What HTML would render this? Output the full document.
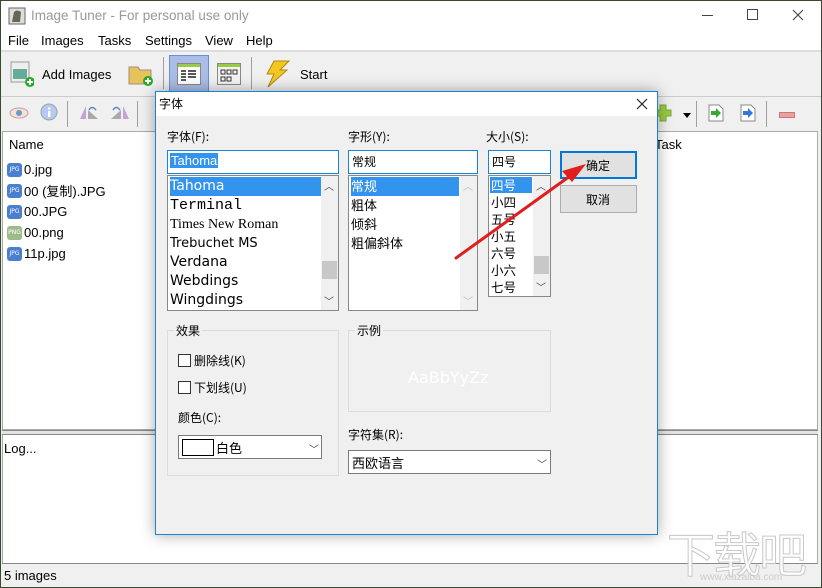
<!DOCTYPE html>
<html><head><meta charset="utf-8"><style>
*{margin:0;padding:0;box-sizing:border-box}
body{width:822px;height:588px;position:relative;overflow:hidden;background:#3b4a2c;font-family:"DejaVu Sans","Liberation Sans","Noto Sans CJK SC",sans-serif;font-size:12px;color:#000}
.a{position:absolute}
.t{font-family:"Liberation Sans","Noto Sans CJK SC",sans-serif;font-size:13px;white-space:nowrap}
.cj{font-family:"Noto Sans CJK SC","Liberation Sans",sans-serif;font-size:12px;white-space:nowrap}
.sep{position:absolute;width:1px;background:#a0a0a0}
</style></head><body>
<div class="a" style="left:1px;top:1px;width:820px;height:586px;background:#f0f0f0"></div>
<div class="a" style="left:1px;top:1px;width:820px;height:49px;background:#fff"></div>
<svg class="a" style="left:8px;top:7px" width="18" height="18"><rect x="1" y="1" width="16" height="16" fill="#ddd" stroke="#666"/><path d="M4 15 L6 5 Q9 2 13 5 L12 15 Z" fill="#665"/></svg>
<div class="a t" style="left:31px;top:8px;color:#999;font-size:13.5px">Image Tuner - For personal use only</div>
<div class="a" style="left:702px;top:15px;width:11px;height:1px;background:#444"></div>
<div class="a" style="left:747px;top:9px;width:11px;height:11px;border:1px solid #444"></div>
<svg class="a" style="left:792px;top:9px" width="12" height="12"><path d="M1 1L11 11M11 1L1 11" stroke="#444" stroke-width="1.1"/></svg>
<div class="a t" style="left:8px;top:33px">File</div>
<div class="a t" style="left:41px;top:33px">Images</div>
<div class="a t" style="left:98px;top:33px">Tasks</div>
<div class="a t" style="left:145px;top:33px">Settings</div>
<div class="a t" style="left:205px;top:33px">View</div>
<div class="a t" style="left:246px;top:33px">Help</div>
<div class="a" style="left:1px;top:50px;width:820px;height:2px;background:#ddd"></div>
<svg class="a" style="left:10px;top:61px" width="24" height="26"><rect x="1" y="1" width="18" height="20" fill="#eee" stroke="#999"/><rect x="3" y="8" width="14" height="10" fill="#6a9"/><circle cx="20" cy="21" r="5" fill="#2a2"/><path d="M17 21h6M20 18v6" stroke="#fff" stroke-width="2"/></svg>
<div class="a t" style="left:42px;top:67px">Add Images</div>
<svg class="a" style="left:128px;top:62px" width="26" height="24"><path d="M1 5h9l2 3h11v14H1z" fill="#e6c25a" stroke="#a88"/><circle cx="20" cy="19" r="5" fill="#2a2"/><path d="M17 19h6M20 16v6" stroke="#fff" stroke-width="2"/></svg>
<div class="sep" style="left:163px;top:57px;height:32px"></div>
<div class="a" style="left:169px;top:55px;width:40px;height:38px;background:#aabde6;border:1px solid #6a8fd6"></div>
<svg class="a" style="left:177px;top:63px" width="24" height="22"><rect x="0.5" y="0.5" width="23" height="21" fill="#fff" stroke="#888"/><rect x="1" y="1" width="22" height="3" fill="#9c4"/><path d="M4 8h5M11 8h8M4 11h5M11 11h8M4 14h5M11 14h8M4 17h5" stroke="#222" stroke-width="1.5"/></svg>
<svg class="a" style="left:217px;top:63px" width="24" height="22"><rect x="0.5" y="0.5" width="23" height="21" fill="#f4f4f4" stroke="#888"/><rect x="1" y="1" width="22" height="3" fill="#9c4"/><rect x="4" y="7" width="4" height="4" fill="none" stroke="#333"/><rect x="10" y="7" width="4" height="4" fill="none" stroke="#333"/><rect x="16" y="7" width="4" height="4" fill="none" stroke="#333"/><rect x="4" y="14" width="4" height="4" fill="none" stroke="#333"/><rect x="10" y="14" width="4" height="4" fill="none" stroke="#333"/></svg>
<div class="sep" style="left:251px;top:57px;height:32px"></div>
<svg class="a" style="left:264px;top:60px" width="26" height="28"><path d="M10 1h15l-9 9h7L4 27l6-13H3z" fill="#f3c620" stroke="#b08a10"/></svg>
<div class="a t" style="left:300px;top:67px">Start</div>
<div class="a" style="left:1px;top:96px;width:820px;height:1px;background:#ccc"></div>
<svg class="a" style="left:9px;top:106px" width="20" height="14"><ellipse cx="10" cy="7" rx="9" ry="5" fill="#f3e3d0" stroke="#c9a"/><circle cx="10" cy="7" r="3" fill="#6a9ac8"/></svg>
<svg class="a" style="left:40px;top:103px" width="18" height="18"><circle cx="9" cy="9" r="8" fill="#b8c8ee" stroke="#8aa"/><rect x="8" y="8" width="2.4" height="6" fill="#fff"/><circle cx="9.2" cy="5.5" r="1.3" fill="#fff"/></svg>
<div class="sep" style="left:67px;top:101px;height:26px"></div>
<svg class="a" style="left:79px;top:104px" width="20" height="16"><path d="M1 15L7 2v13z" fill="#c9a0d6"/><path d="M9 15h10L9 6z" fill="#aaa"/><path d="M10 6q3-5 7 0" stroke="#58c" fill="none" stroke-width="1.5"/></svg>
<svg class="a" style="left:110px;top:104px" width="20" height="16"><path d="M19 15L13 2v13z" fill="#c9a0d6"/><path d="M11 15H1L11 6z" fill="#aaa"/><path d="M3 6q3-5 7 0" stroke="#58c" fill="none" stroke-width="1.5"/></svg>
<div class="sep" style="left:137px;top:101px;height:26px"></div>
<svg class="a" style="left:654px;top:104px" width="18" height="18"><path d="M6 1h6v5h5v6h-5v5H6v-5H1V6h5z" fill="#9c4" stroke="#7a3"/></svg>
<div class="a" style="left:683px;top:113px;border-left:4px solid transparent;border-right:4px solid transparent;border-top:5px solid #000"></div>
<div class="sep" style="left:696px;top:101px;height:26px"></div>
<svg class="a" style="left:708px;top:104px" width="16" height="18"><path d="M1 1h10l4 4v12H1z" fill="#fff" stroke="#888"/><path d="M3 7h5V4l5 5-5 5v-3H3z" fill="#3a3"/></svg>
<svg class="a" style="left:740px;top:104px" width="16" height="18"><path d="M1 1h10l4 4v12H1z" fill="#fff" stroke="#888"/><path d="M3 7h5V4l5 5-5 5v-3H3z" fill="#37d"/></svg>
<div class="sep" style="left:766px;top:101px;height:26px"></div>
<div class="a" style="left:779px;top:112px;width:16px;height:6px;background:#e9a0a0;border:1px solid #c77"></div>
<div class="a" style="left:2px;top:131px;width:816px;height:299px;background:#fff;border:1px solid #aaa"></div>
<div class="a t" style="left:9px;top:137px">Name</div>
<div class="a t" style="left:655px;top:137px">Task</div>
<div class="a" style="left:7px;top:159px;width:100px">
 <div style="height:21px;display:flex;align-items:center"><span style="display:inline-block;width:15px;height:14px;background:#4a7fd0;border-radius:3px;color:#fff;font-size:6px;line-height:14px;text-align:center;margin-right:2px">JPG</span><span class="t">0.jpg</span></div>
 <div style="height:21px;display:flex;align-items:center"><span style="display:inline-block;width:15px;height:14px;background:#4a7fd0;border-radius:3px;color:#fff;font-size:6px;line-height:14px;text-align:center;margin-right:2px">JPG</span><span class="t">00 (<span class="cj" style="font-size:13px">复制</span>).JPG</span></div>
 <div style="height:21px;display:flex;align-items:center"><span style="display:inline-block;width:15px;height:14px;background:#4a7fd0;border-radius:3px;color:#fff;font-size:6px;line-height:14px;text-align:center;margin-right:2px">JPG</span><span class="t">00.JPG</span></div>
 <div style="height:21px;display:flex;align-items:center"><span style="display:inline-block;width:15px;height:14px;background:#9cbb88;border-radius:3px;color:#fff;font-size:6px;line-height:14px;text-align:center;margin-right:2px">PNG</span><span class="t">00.png</span></div>
 <div style="height:21px;display:flex;align-items:center"><span style="display:inline-block;width:15px;height:14px;background:#4a7fd0;border-radius:3px;color:#fff;font-size:6px;line-height:14px;text-align:center;margin-right:2px">JPG</span><span class="t">11p.jpg</span></div>
</div>
<div class="a" style="left:2px;top:430px;width:816px;height:5px;background:#e4e4e4;border-top:1px solid #888;border-bottom:1px solid #888"></div>
<div class="a" style="left:2px;top:435px;width:816px;height:128px;background:#fff;border-left:1px solid #aaa;border-right:1px solid #aaa"></div>
<div class="a t" style="left:4px;top:441px">Log...</div>
<div class="a" style="left:2px;top:563px;width:816px;height:1px;background:#888"></div>
<div class="a t" style="left:4px;top:568px">5 images</div>
<div class="a cj" style="left:667px;top:516px;font-size:48px;color:rgba(255,255,255,0.9);-webkit-text-stroke:1px #c8c8c8;letter-spacing:-2px">下载吧</div>
<div class="a t" style="left:700px;top:572px;font-size:10px;color:#ccc">www.xiazaiba.com</div>
<div class="a" style="left:155px;top:91px;width:503px;height:444px;background:#f0f0f0;border:1px solid #1883d7;box-shadow:0 0 14px rgba(0,0,0,0.35)"></div>
<div class="a" style="left:156px;top:92px;width:501px;height:24px;background:#fff"></div>
<div class="a cj" style="left:159px;top:95px">字体</div>
<svg class="a" style="left:636px;top:98px" width="12" height="12"><path d="M1 1L11 11M11 1L1 11" stroke="#222" stroke-width="1.2"/></svg>
<div class="a cj" style="left:167px;top:128px">字体(F):</div>
<div class="a cj" style="left:348px;top:128px">字形(Y):</div>
<div class="a cj" style="left:486px;top:128px">大小(S):</div>
<div class="a" style="left:167px;top:150px;width:172px;height:24px;background:#fff;border:1px solid #1883d7"></div>
<div class="a t" style="left:170px;top:153px;background:#3394ee;color:#fff;padding:0 1px">Tahoma</div>
<div class="a" style="left:348px;top:150px;width:130px;height:24px;background:#fff;border:1px solid #1883d7"></div>
<div class="a cj" style="left:352px;top:153px">常规</div>
<div class="a" style="left:488px;top:150px;width:63px;height:24px;background:#fff;border:1px solid #1883d7"></div>
<div class="a cj" style="left:492px;top:153px">四号</div>
<div class="a" style="left:167px;top:175px;width:172px;height:136px;background:#fff;border:1px solid #888;overflow:hidden">
 <div style="position:absolute;left:2px;top:1px;width:151px;height:19px;background:#3394ee"></div>
 <div style="position:absolute;left:2px;top:1px;font-size:14px;line-height:19px;white-space:nowrap">
  <div style="color:#fff;font-family:'DejaVu Sans'">Tahoma</div>
  <div style="font-family:'Liberation Mono';font-size:15px">Terminal</div>
  <div style="font-family:'Liberation Serif'">Times New Roman</div>
  <div style="font-family:'DejaVu Sans';font-size:13px">Trebuchet MS</div>
  <div style="font-family:'DejaVu Sans'">Verdana</div>
  <div style="font-family:'DejaVu Sans'">Webdings</div>
  <div style="font-family:'DejaVu Sans'">Wingdings</div>
 </div>
 <div style="position:absolute;left:153px;top:0;width:17px;height:134px;background:#f0f0f0"></div>
 <div style="position:absolute;left:154px;top:85px;width:15px;height:18px;background:#c8c8c8"></div>
 <div style="position:absolute;left:156px;top:2px;font-size:10px;color:#444">︿</div>
 <div style="position:absolute;left:156px;top:117px;font-size:10px;color:#444">﹀</div>
</div>
<div class="a" style="left:348px;top:175px;width:130px;height:136px;background:#fff;border:1px solid #888;overflow:hidden">
 <div style="position:absolute;left:2px;top:1px;width:108px;height:19px;background:#3394ee"></div>
 <div class="cj" style="position:absolute;left:2px;top:0;font-size:13px;line-height:19px">
  <div style="color:#fff">常规</div><div>粗体</div><div>倾斜</div><div>粗偏斜体</div>
 </div>
 <div style="position:absolute;left:111px;top:0;width:17px;height:134px;background:#f0f0f0"></div>
 <div style="position:absolute;left:114px;top:2px;font-size:10px;color:#bbb">︿</div>
 <div style="position:absolute;left:114px;top:117px;font-size:10px;color:#bbb">﹀</div>
</div>
<div class="a" style="left:488px;top:175px;width:63px;height:122px;background:#fff;border:1px solid #888;overflow:hidden">
 <div style="position:absolute;left:1px;top:1px;width:42px;height:16px;background:#3394ee"></div>
 <div class="cj" style="position:absolute;left:2px;top:0;font-size:12.5px;line-height:17px">
  <div style="color:#fff">四号</div><div>小四</div><div>五号</div><div>小五</div><div>六号</div><div>小六</div><div>七号</div>
 </div>
 <div style="position:absolute;left:44px;top:0;width:17px;height:120px;background:#f0f0f0"></div>
 <div style="position:absolute;left:45px;top:80px;width:15px;height:18px;background:#c8c8c8"></div>
 <div style="position:absolute;left:47px;top:2px;font-size:10px;color:#444">︿</div>
 <div style="position:absolute;left:47px;top:103px;font-size:10px;color:#444">﹀</div>
</div>
<div class="a" style="left:560px;top:151px;width:77px;height:28px;background:#e1e1e1;border:2px solid #0078d7"></div>
<div class="a cj" style="left:586px;top:157px">确定</div>
<div class="a" style="left:560px;top:185px;width:77px;height:28px;background:#e1e1e1;border:1px solid #adadad"></div>
<div class="a cj" style="left:586px;top:191px">取消</div>
<div class="a" style="left:167px;top:330px;width:172px;height:146px;border:1px solid #dcdcdc"></div>
<div class="a cj" style="left:174px;top:322px;background:#f0f0f0;padding:0 2px">效果</div>
<div class="a" style="left:178px;top:354px;width:13px;height:13px;background:#fff;border:1px solid #333"></div>
<div class="a cj" style="left:194px;top:352px">删除线(K)</div>
<div class="a" style="left:178px;top:381px;width:13px;height:13px;background:#fff;border:1px solid #333"></div>
<div class="a cj" style="left:194px;top:379px">下划线(U)</div>
<div class="a cj" style="left:178px;top:409px">颜色(C):</div>
<div class="a" style="left:178px;top:435px;width:144px;height:24px;background:#fff;border:1px solid #7a7a7a"></div>
<div class="a" style="left:182px;top:439px;width:32px;height:17px;background:#fff;border:1px solid #000"></div>
<div class="a cj" style="left:216px;top:438px;font-size:13px">白色</div>
<div class="a" style="left:309px;top:441px;font-size:10px;color:#444">﹀</div>
<div class="a" style="left:348px;top:330px;width:203px;height:82px;border:1px solid #dcdcdc"></div>
<div class="a cj" style="left:355px;top:322px;background:#f0f0f0;padding:0 2px">示例</div>
<div class="a t" style="left:408px;top:368px;color:#fff;font-size:16px;font-family:'DejaVu Sans'">AaBbYyZz</div>
<div class="a cj" style="left:348px;top:426px">字符集(R):</div>
<div class="a" style="left:348px;top:450px;width:203px;height:24px;background:#fff;border:1px solid #7a7a7a"></div>
<div class="a cj" style="left:352px;top:453px;font-size:13px">西欧语言</div>
<div class="a" style="left:537px;top:456px;font-size:10px;color:#444">﹀</div>
<svg class="a" style="left:0;top:0" width="822" height="588"><line x1="456" y1="258" x2="570" y2="176" stroke="#e21d1d" stroke-width="3" stroke-linecap="round"/><path d="M586 164 L562 171 L572 182 Z" fill="#e21d1d"/></svg>
</body></html>
